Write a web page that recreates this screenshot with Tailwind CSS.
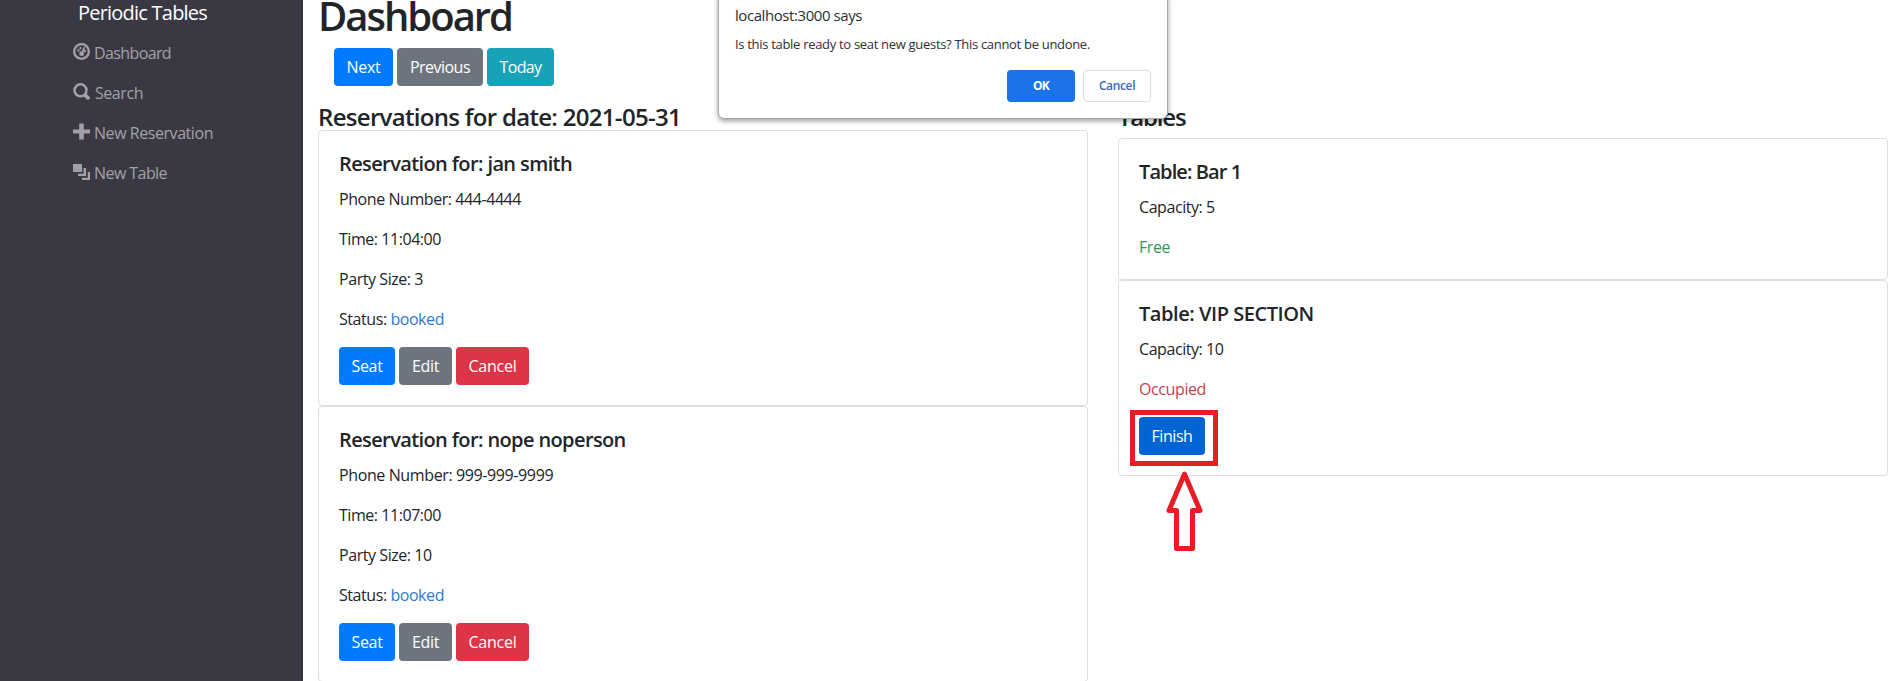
<!DOCTYPE html>
<html lang="en">
<head>
<meta charset="utf-8">
<title>Periodic Tables</title>
<script src="https://cdn.jsdelivr.net/npm/@tailwindcss/browser@4"></script>
</head>
<body class="relative flex h-[681px] overflow-hidden bg-white font-['Open_Sans',sans-serif] text-base leading-6 text-[#212529] whitespace-nowrap">

<nav class="h-full w-[303px] shrink-0 border-r-2 border-[#35343b] bg-[#3a3943] text-[#a2a1a7]">
  <div class="pl-[78px] text-xl leading-[26px] tracking-[-0.039em] text-white">Periodic Tables</div>
  <ul class="mt-[15px] flex flex-col gap-4 pl-[73px]">
    <li class="flex h-6 gap-1">
      <svg class="mt-[2px] size-[17px]" viewBox="0 0 16 16" fill="currentColor"><path fill-rule="evenodd" d="M8 0a8 8 0 1 1 0 16A8 8 0 0 1 8 0Zm0 2.2a5.800 5.800 0 1 0 0 11.600A5.800 5.800 0 0 0 8 2.200Z"/><circle cx="5.100" cy="7" r="1.100"/><circle cx="7" cy="4.800" r="1.100"/><circle cx="11.200" cy="7.500" r="1.100"/><path d="m10.200 3.600 1.300.6-1.700 4.200a2.300 2.300 0 1 1-1.600-.7Z"/></svg>
      <span class="tracking-[-0.0387em]">Dashboard</span>
    </li>
    <li class="flex h-6 gap-[5px]">
      <svg class="mt-[2px] size-[17px]" viewBox="0 0 17 17" fill="none" stroke="currentColor"><circle cx="7.500" cy="7.300" r="6" stroke-width="2.500"/><path d="m12.500 12.500 2.500 2.300" stroke-width="3.800" stroke-linecap="round"/></svg>
      <span class="tracking-[-0.0278em]">Search</span>
    </li>
    <li class="flex h-6 gap-1">
      <svg class="mt-[2px] size-[17px]" viewBox="0 0 17 17" fill="currentColor"><path d="M6.200 .5h4.600v5.900H17v4.200h-6.200v5.900H6.200v-5.900H0V6.400h6.200Z"/></svg>
      <span class="tracking-[-0.0277em]">New Reservation</span>
    </li>
    <li class="flex h-6 gap-1">
      <svg class="mt-[2px] size-[17px]" viewBox="0 0 17 17" fill="currentColor"><path d="M0 1h9v8H0ZM10.500 5H13v8H5v-2.200h5.500ZM14.800 9H17v8H9v-2.200h5.800Z"/></svg>
      <span class="tracking-[-0.0355em]">New Table</span>
    </li>
  </ul>
</nav>

<main class="flex flex-1 flex-col pl-[15px]">
  <h1 class="-mt-2 text-[40px] leading-[48px] font-semibold tracking-[-0.0503em]">Dashboard</h1>
  <div class="mt-2 ml-4 flex gap-1 text-white">
    <button class="h-[38px] w-[59px] rounded bg-[#007bff] tracking-[-0.0173em]">Next</button>
    <button class="h-[38px] w-[86px] rounded bg-[#6c757d] tracking-[-0.0332em]">Previous</button>
    <button class="h-[38px] w-[67px] rounded bg-[#17a2b8] tracking-[-0.0393em]">Today</button>
  </div>

  <div class="mt-[15px] flex gap-[30px]">
    <section class="w-[770px]">
      <h4 class="h-[29px] text-2xl leading-8 font-semibold tracking-[-0.0289em]">Reservations for date: 2021-05-31</h4>
      <article class="h-[276px] rounded border border-[#dfdfdf] p-5">
        <h5 class="mb-[10px] text-xl leading-[26px] font-semibold tracking-[-0.0306em]">Reservation for: jan smith</h5>
        <p class="mb-4 tracking-[-0.027em]">Phone Number: 444-4444</p>
        <p class="mb-4 tracking-[-0.0282em]">Time: 11:04:00</p>
        <p class="mb-4 tracking-[-0.0272em]">Party Size: 3</p>
        <p class="mb-4 tracking-[-0.0272em]">Status: <span class="text-[#3079cf]">booked</span></p>
        <div class="flex gap-1 text-white">
          <button class="h-[38px] w-14 rounded bg-[#007bff] tracking-[-0.0212em]">Seat</button>
          <button class="h-[38px] w-[53px] rounded bg-[#6c757d] tracking-[-0.0212em]">Edit</button>
          <button class="h-[38px] w-[73px] rounded bg-[#dc3545] tracking-[-0.0153em]">Cancel</button>
        </div>
      </article>
      <article class="h-[276px] rounded border border-[#dfdfdf] p-5">
        <h5 class="mb-[10px] text-xl leading-[26px] font-semibold tracking-[-0.0306em]">Reservation for: nope noperson</h5>
        <p class="mb-4 tracking-[-0.024em]">Phone Number: 999-999-9999</p>
        <p class="mb-4 tracking-[-0.0282em]">Time: 11:07:00</p>
        <p class="mb-4 tracking-[-0.0272em]">Party Size: 10</p>
        <p class="mb-4 tracking-[-0.0272em]">Status: <span class="text-[#3079cf]">booked</span></p>
        <div class="flex gap-1 text-white">
          <button class="h-[38px] w-14 rounded bg-[#007bff] tracking-[-0.0212em]">Seat</button>
          <button class="h-[38px] w-[53px] rounded bg-[#6c757d] tracking-[-0.0212em]">Edit</button>
          <button class="h-[38px] w-[73px] rounded bg-[#dc3545] tracking-[-0.0153em]">Cancel</button>
        </div>
      </article>
    </section>

    <section class="w-[770px]">
      <h4 class="mb-2 h-[29px] text-2xl leading-8 font-semibold tracking-[-0.05em]">Tables</h4>
      <article class="h-[142px] rounded border border-[#dfdfdf] p-5">
        <h5 class="mb-[10px] text-xl leading-[26px] font-semibold tracking-[-0.045em]">Table: Bar 1</h5>
        <p class="mb-4 tracking-[-0.0272em]">Capacity: 5</p>
        <p class="tracking-[-0.0272em] text-[#3d9452]">Free</p>
      </article>
      <article class="h-[196px] rounded border border-[#dfdfdf] p-5">
        <h5 class="mb-[10px] text-xl leading-[26px] font-semibold tracking-[-0.0225em]">Table: VIP SECTION</h5>
        <p class="mb-4 tracking-[-0.0272em]">Capacity: 10</p>
        <p class="mb-4 tracking-[-0.0249em] text-[#bc4650]">Occupied</p>
        <div class="relative w-[66px]">
          <button class="h-[38px] w-full rounded bg-[#0064d2] tracking-[-0.027em] text-white">Finish</button>
          <div class="absolute -top-[7px] -left-[9px] h-14 w-[88px] border-5 border-[#e81c24]"></div>
          <svg class="absolute top-[53px] left-[26px] h-[83px] w-10" viewBox="0 0 40 83" fill="none" stroke="#e81c24" stroke-width="5" stroke-linejoin="round"><path d="M19.500 4 35 40.500H27.500V78.500H11.500V40.500H4Z"/></svg>
        </div>
      </article>
    </section>
  </div>
</main>

<div role="dialog" class="absolute -top-2 left-[718px] h-[127px] w-[450px] rounded-md border border-[#a9a9a9] bg-white pt-3 pr-4 pl-4 text-[#2e2f32] shadow-[0_2px_5px_rgba(0,0,0,0.4)]">
  <div class="text-[15px] leading-5 tracking-[-0.0285em]">localhost:3000 says</div>
  <div class="mt-[9px] text-[13px] leading-5 tracking-[-0.0236em]">Is this table ready to seat new guests? This cannot be undone.</div>
  <div class="mt-4 flex justify-end gap-2 text-xs">
    <button class="h-8 w-[68px] rounded bg-[#1a73e8] font-bold tracking-[-0.06em] text-white">OK</button>
    <button class="h-8 w-[68px] rounded border border-[#dadce0] font-semibold tracking-[-0.03em] text-[#3868c0]">Cancel</button>
  </div>
</div>
</body>
</html>
